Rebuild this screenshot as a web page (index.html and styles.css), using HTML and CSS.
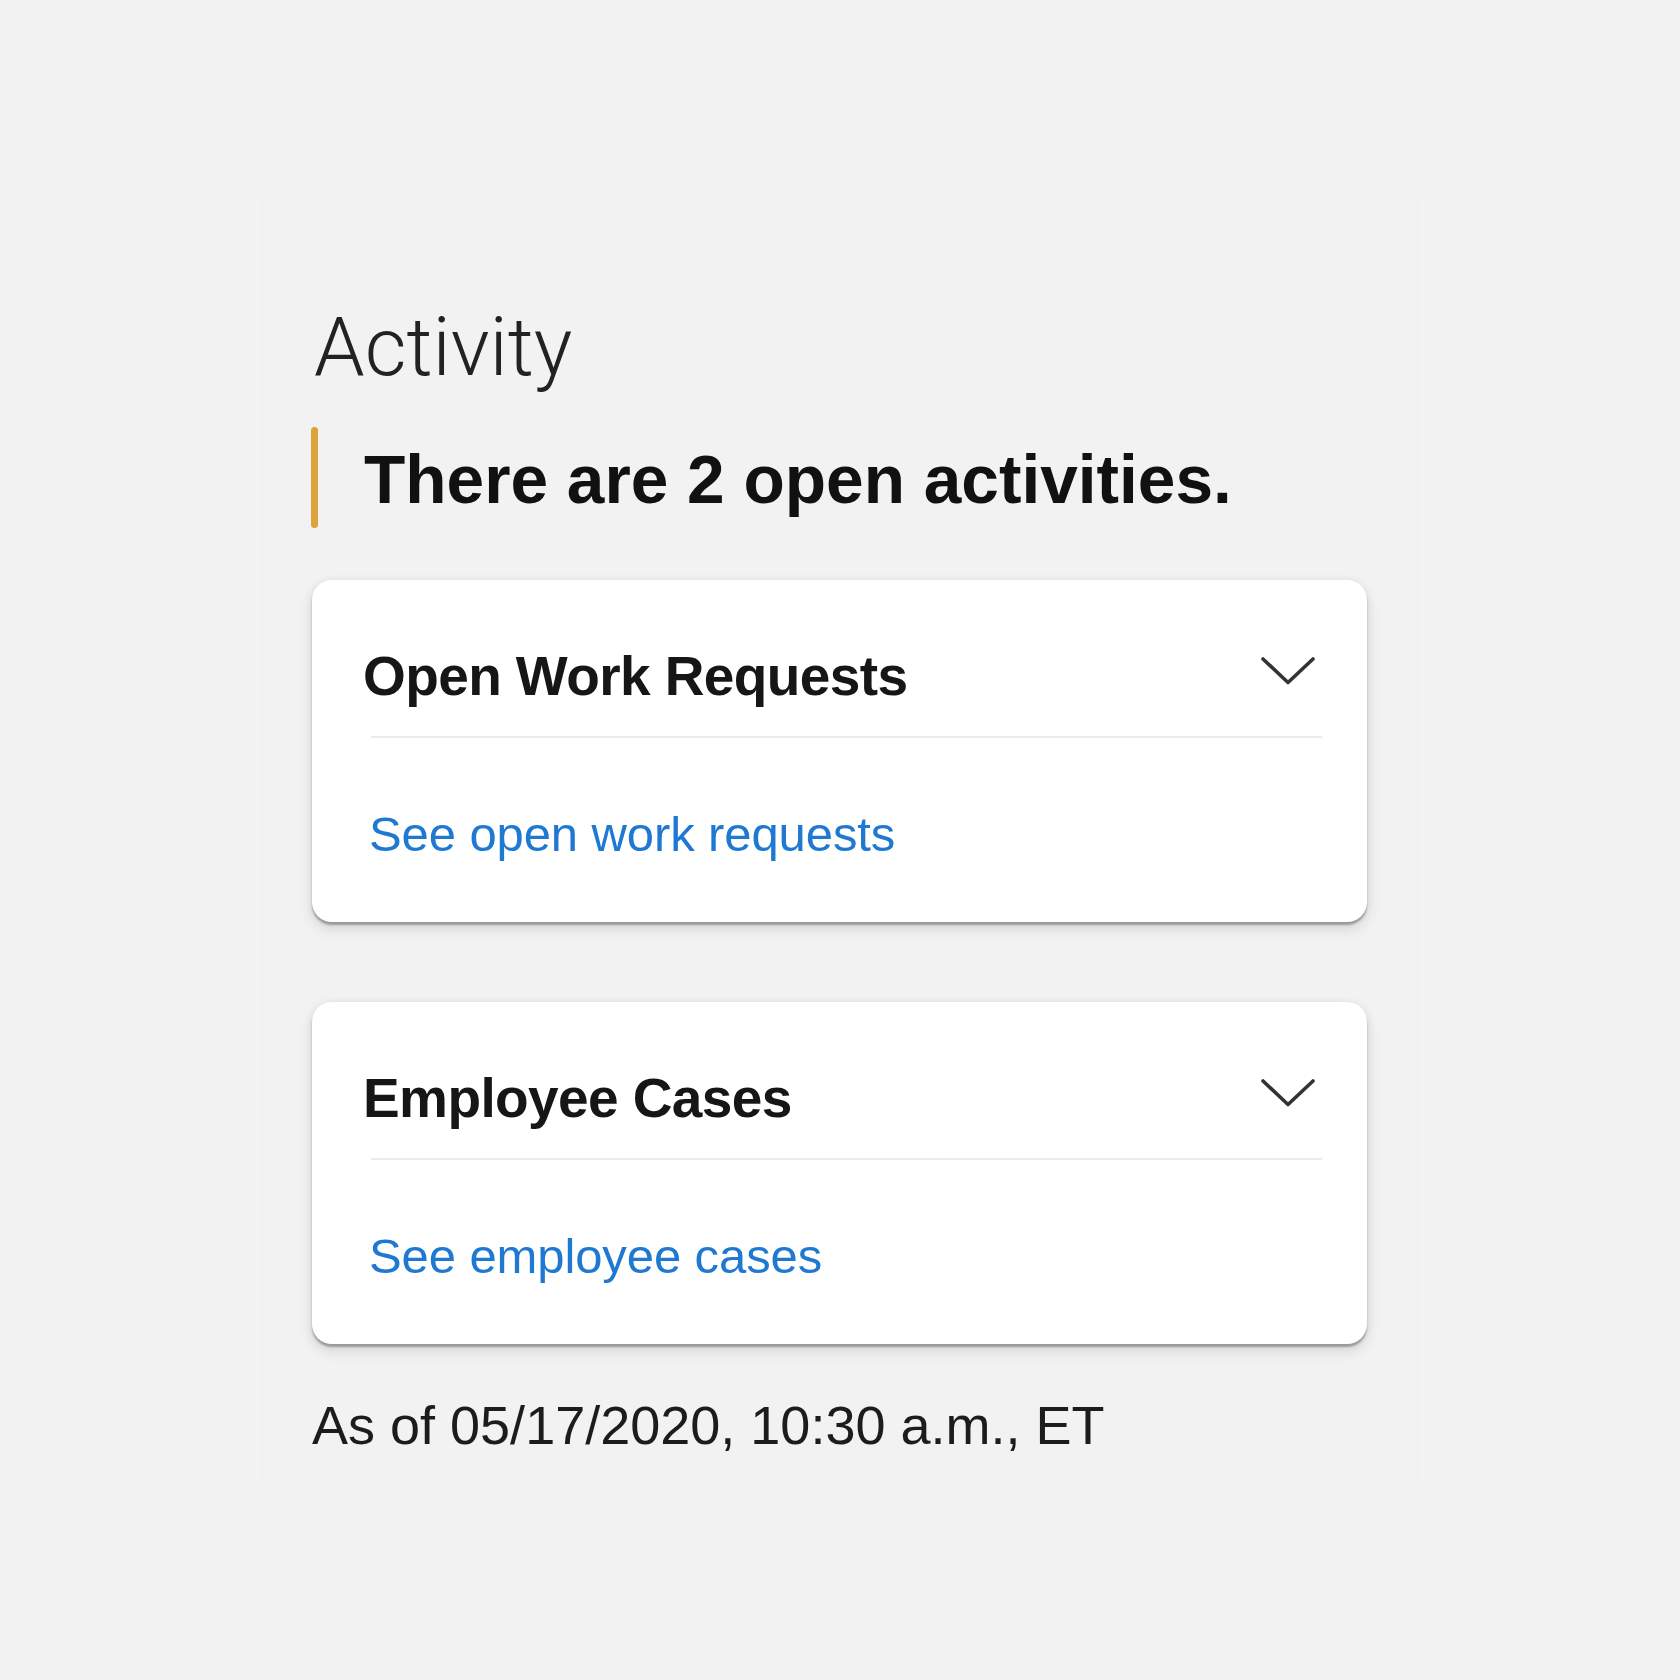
FILE: index.html
```html
<!DOCTYPE html>
<html lang="en">
<head>
<meta charset="utf-8">
<title>Activity</title>
<link rel="stylesheet" href="styles.css">
</head>
<body>
<main class="panel">
  <h1 class="panel-title">Activity</h1>
  <div class="summary">
    <span class="summary-bar"></span>
    <p class="summary-text">There are 2 open activities.</p>
  </div>

  <section class="card">
    <div class="card-header">
      <h2 class="card-title">Open Work Requests</h2>
      <svg class="chevron" viewBox="0 0 54 28" width="54" height="28" aria-hidden="true">
        <polyline points="2,2 27,25.5 52,2" fill="none" stroke="#333" stroke-width="3.6" stroke-linecap="round" stroke-linejoin="round"/>
      </svg>
    </div>
    <div class="card-divider"></div>
    <a class="card-link" href="#">See open work requests</a>
  </section>

  <section class="card card-second">
    <div class="card-header">
      <h2 class="card-title">Employee Cases</h2>
      <svg class="chevron" viewBox="0 0 54 28" width="54" height="28" aria-hidden="true">
        <polyline points="2,2 27,25.5 52,2" fill="none" stroke="#333" stroke-width="3.6" stroke-linecap="round" stroke-linejoin="round"/>
      </svg>
    </div>
    <div class="card-divider"></div>
    <a class="card-link" href="#">See employee cases</a>
  </section>

  <p class="timestamp">As of 05/17/2020, 10:30 a.m., ET</p>
</main>
</body>
</html>
```

FILE: styles.css
```css
html, body {
  margin: 0;
  padding: 0;
  background: #f2f2f2;
}

body {
  width: 1680px;
  height: 1680px;
  font-family: "Liberation Sans", Arial, sans-serif;
  color: #1a1a1a;
}

.panel {
  box-sizing: border-box;
  margin: 198px 0 0 257px;
  width: 1166px;
  height: 1283px;
  padding: 110px 55px 0 54px;
  background: #f2f2f2;
  border-left: 1px solid #f6f6f6;
  border-right: 1px solid #f7f7f7;
}

.panel-title {
  margin: 0 0 39px 2px;
  font-family: Roboto, "Liberation Sans", sans-serif;
  font-weight: 300;
  font-size: 81px;
  line-height: 80px;
  color: #222;
}

.summary {
  display: flex;
  align-items: stretch;
  height: 101px;
  margin-left: -1px;
}

.summary-bar {
  flex: 0 0 7px;
  width: 7px;
  border-radius: 4px;
  background: #dea23a;
}

.summary-text {
  margin: 0 0 0 46px;
  padding-top: 2px;
  font-weight: 700;
  font-size: 67.6px;
  line-height: 101px;
  color: #111;
}

.card {
  margin-top: 52px;
  height: 342px;
  box-sizing: border-box;
  background: #fff;
  border-radius: 20px;
  box-shadow:
    0 3px 2px rgba(0, 0, 0, 0.28),
    0 7px 14px rgba(0, 0, 0, 0.12),
    0 0 8px rgba(0, 0, 0, 0.05);
  padding-top: 68px;
}

.card-second {
  margin-top: 80px;
}

.card-header {
  display: flex;
  justify-content: space-between;
  align-items: flex-start;
  padding: 0 52px 0 51px;
}

.card-title {
  margin: 0;
  font-weight: 700;
  font-size: 55px;
  line-height: 57px;
  letter-spacing: -0.6px;
  color: #161616;
}

.chevron {
  display: block;
  margin-top: 9px;
  flex: 0 0 auto;
}

.card-divider {
  height: 2px;
  margin: 31px 45px 0 59px;
  background: #ececec;
}

.card-link {
  display: block;
  margin: 72px 0 0 57px;
  font-size: 49px;
  line-height: 49px;
  letter-spacing: -0.1px;
  color: #1f78d1;
  text-decoration: none;
}

.timestamp {
  margin: 54px 0 0 0;
  font-size: 54px;
  line-height: 54px;
  color: #1c1c1c;
}
```
